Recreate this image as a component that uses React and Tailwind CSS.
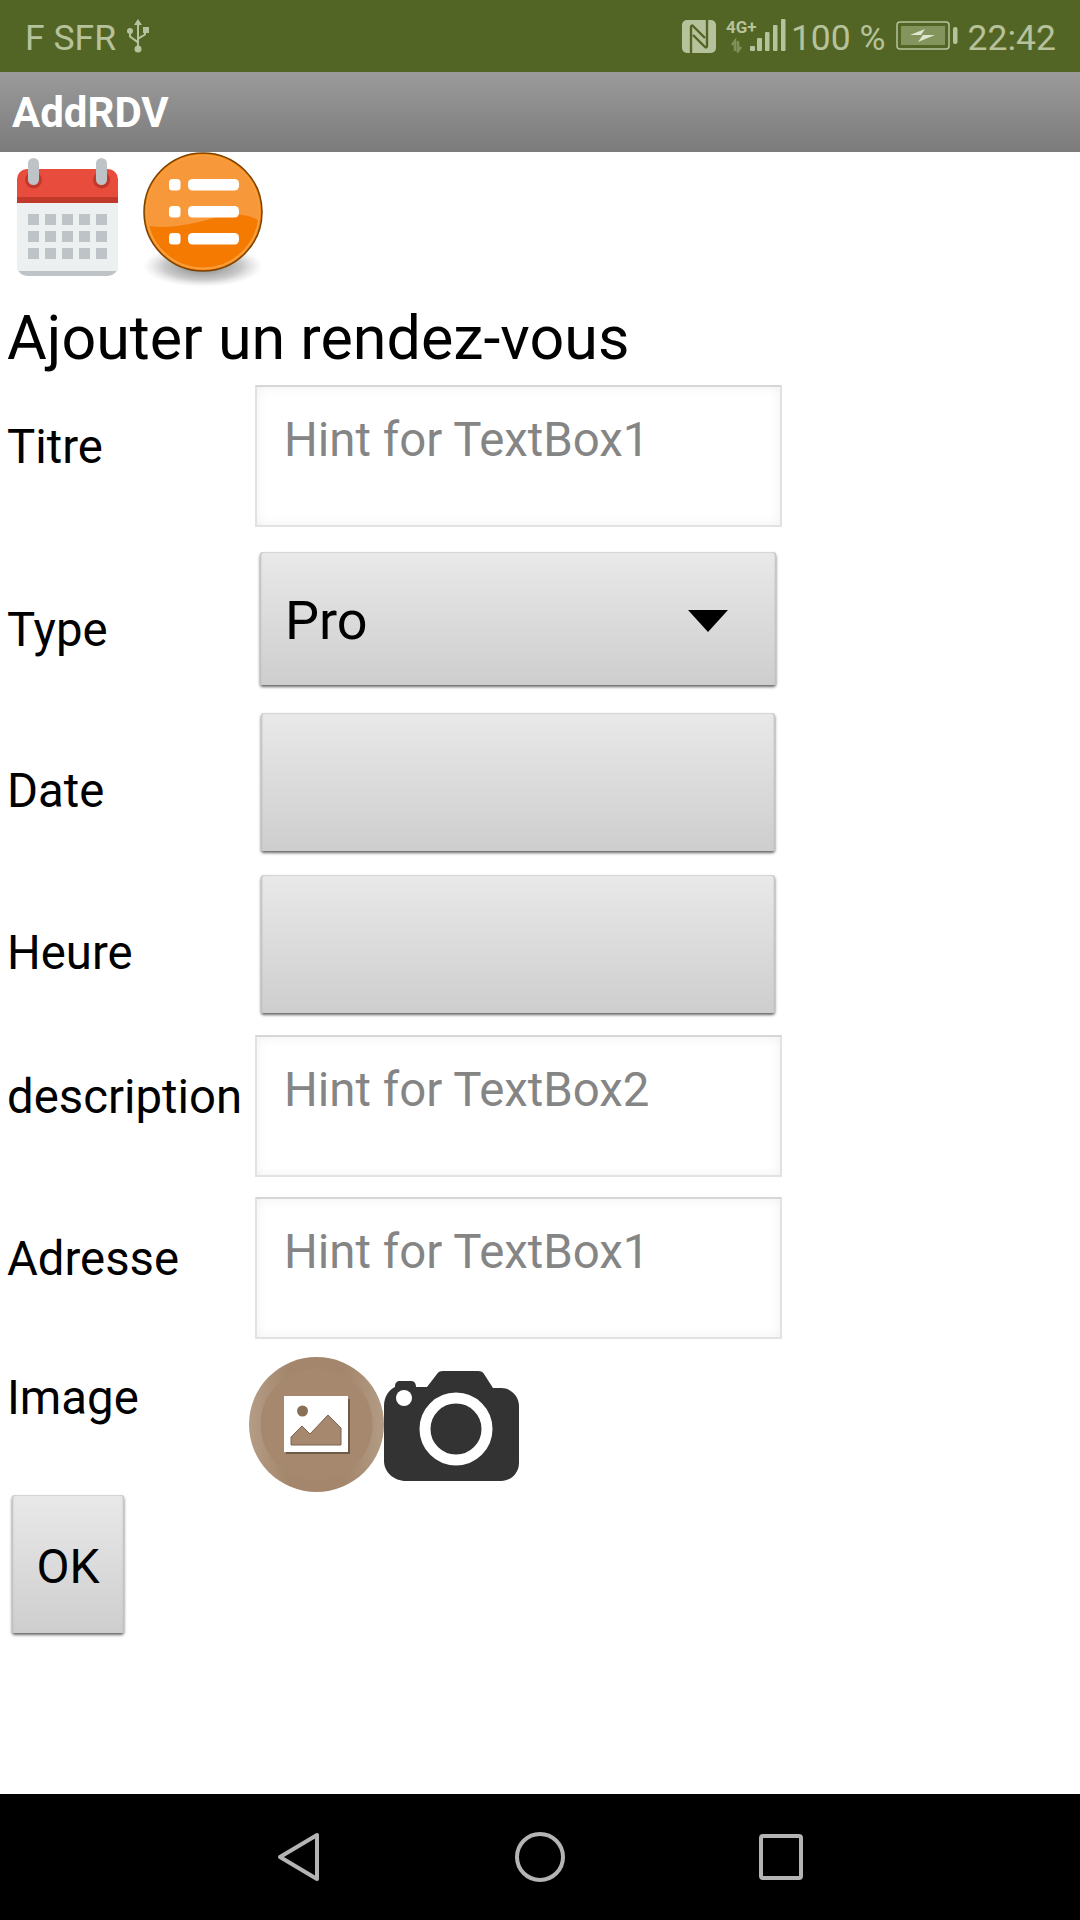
import React from "react";

const RAISED =
  "bg-linear-to-b from-[#e9e9e9] to-[#cecece] rounded-[3px] shadow-[0_2px_3px_#666,inset_2px_0_2px_-1px_#bdbdbd,inset_-2px_0_2px_-1px_#bdbdbd,inset_0_1px_1px_#d8d8d8]";

function CalendarIcon() {
  const cols = [28, 45, 62, 79, 96];
  const rows = [214, 231, 248];
  return (
    <svg width="120" height="138" viewBox="0 152 120 138" className="shrink-0">
      <path d="M17 255h101v11a10 10 0 0 1-10 10H27a10 10 0 0 1-10-10z" fill="#bdc3c7" />
      <rect x="17" y="190" width="101" height="81" fill="#ecf0f1" />
      <path d="M17 197v-18a10 10 0 0 1 10-10h81a10 10 0 0 1 10 10v18z" fill="#e74c3c" />
      <rect x="17" y="197" width="101" height="6" fill="#c0392b" />
      <circle cx="33.5" cy="180" r="8.5" fill="#c0392b" />
      <circle cx="101.5" cy="180" r="8.5" fill="#c0392b" />
      <rect x="28" y="158" width="11" height="27" rx="5.5" fill="#bdc3c7" />
      <rect x="96" y="158" width="11" height="27" rx="5.5" fill="#bdc3c7" />
      {rows.map((y) =>
        cols.map((x) => <rect key={`${x}-${y}`} x={x} y={y} width="11" height="11" fill="#bdc3c7" />)
      )}
    </svg>
  );
}

function ListIcon() {
  return (
    <svg width="124" height="138" viewBox="142 152 124 138" className="shrink-0">
      <defs>
        <radialGradient id="listShadow" cx="0.5" cy="0.5" r="0.5">
          <stop offset="0" stopColor="#555" stopOpacity="0.8" />
          <stop offset="0.65" stopColor="#888" stopOpacity="0.45" />
          <stop offset="1" stopColor="#bbb" stopOpacity="0" />
        </radialGradient>
      </defs>
      <ellipse cx="203" cy="266" rx="60" ry="21" fill="url(#listShadow)" />
      <circle cx="203" cy="212" r="59" fill="#f57a02" stroke="#7a4300" strokeWidth="1.5" />
      <circle cx="203" cy="212" r="56.5" fill="none" stroke="#f9a03f" strokeWidth="2" />
      <path
        d="M147 212a56 56 0 0 1 112 0c0 3 0 5-1 8-14-8-30-6-44-2-22 6-44 11-65 8-1-4-2-9-2-14z"
        fill="#f7993a"
      />
      {[179, 206, 233].map((y) => (
        <g key={y} fill="#fff">
          <rect x="169" y={y} width="11.5" height="11.5" rx="3.5" />
          <rect x="188" y={y} width="51" height="11.5" rx="4.5" />
        </g>
      ))}
    </svg>
  );
}

function GalleryIcon() {
  return (
    <svg width="135" height="135" viewBox="249 1357 135 135" className="shrink-0">
      <defs>
        <linearGradient id="galleryRing" x1="0" y1="0" x2="1" y2="0">
          <stop offset="0" stopColor="#b59c85" />
          <stop offset="0.3" stopColor="#a3866b" />
          <stop offset="0.7" stopColor="#a3866b" />
          <stop offset="1" stopColor="#b39b85" />
        </linearGradient>
      </defs>
      <circle cx="316.5" cy="1424.5" r="67.5" fill="url(#galleryRing)" />
      <circle cx="316.5" cy="1424.5" r="56" fill="#a5886d" />
      <rect x="286" y="1399" width="64" height="55" fill="#6f5a47" />
      <rect x="284" y="1396" width="64" height="56" fill="#fff" />
      <circle cx="302.5" cy="1411" r="5.5" fill="#8a6f57" />
      <path d="M291 1445v-8l11-11 8 8 18-19 13 13v17z" fill="#a5886d" stroke="#7a6450" strokeWidth="1" />
    </svg>
  );
}

function CameraIcon() {
  return (
    <svg width="135" height="135" viewBox="384 1357 135 135" className="shrink-0">
      <path
        d="M384 1406c0-10 6-17 11-19v-1c0-3 2-5 5-5h11c3 0 5 2 5 6h11l10-13c1-2 3-3 6-3h35c3 0 5 1 6 3l9 14h8c10 0 18 8 18 18v57c0 10-8 18-18 18h-95c-12 0-22-9-22-20z"
        fill="#333"
      />
      <circle cx="404" cy="1398" r="8" fill="#fff" />
      <circle cx="456" cy="1429" r="31" fill="#333" stroke="#fff" strokeWidth="11" />
    </svg>
  );
}

function UsbIcon() {
  return (
    <svg width="24" height="34" viewBox="0 0 24 34" className="ml-[10px] shrink-0" fill="#b6c29c">
      <path d="M12 0l4 6h-3v21h-2V6H8z" />
      <circle cx="12" cy="30" r="3.5" />
      <path d="M11 24 3 18v-4h2v3l7 5z" />
      <circle cx="4" cy="12" r="3" />
      <path d="M12 21l8-5v-3h-2v2l-7 4z" />
      <rect x="17" y="8" width="6" height="6" />
    </svg>
  );
}

function NfcIcon() {
  return (
    <svg width="34" height="33" viewBox="0 0 34 33" className="shrink-0">
      <rect width="34" height="33" rx="5" fill="#b6c29c" />
      <path d="M9 33V7c0-1 1-2 2-1l12 12M25 0v26c0 1-1 2-2 1L11 15" fill="none" stroke="#536524" strokeWidth="2.4" />
    </svg>
  );
}

function SignalIcon() {
  return (
    <div className="ml-[10px] w-[62px] h-[34px] relative shrink-0">
      <span className="absolute left-0 top-[-1px] text-[17px] leading-[18px] font-bold text-[#b6c29c]">4G+</span>
      <svg width="62" height="34" viewBox="0 0 62 34" className="block">
        <path d="M9 32V22l-3 4M12 22v10l3-4" stroke="#7f9158" strokeWidth="2.5" fill="none" />
        <g fill="#b6c29c">
          <rect x="24" y="27" width="5" height="5" rx="1" />
          <rect x="31" y="19" width="5" height="13" rx="1" />
          <rect x="39" y="13" width="4.5" height="19" rx="1" />
          <rect x="47" y="6" width="4.5" height="26" rx="1" />
          <rect x="55" y="0" width="4.5" height="32" rx="1" />
        </g>
      </svg>
    </div>
  );
}

function BatteryIcon() {
  return (
    <svg width="62" height="30" viewBox="0 0 62 30" className="ml-[10px] shrink-0">
      <rect x="1" y="1" width="52" height="27" rx="3" fill="none" stroke="#b6c29c" strokeWidth="1.5" />
      <rect x="5" y="5" width="44" height="19" fill="#83955c" />
      <path d="M14 14l15-6-4 6h14l-17 7 5-7z" fill="#dfe5d0" />
      <rect x="57" y="6" width="4.5" height="17" rx="2" fill="#b6c29c" />
    </svg>
  );
}

function Hint({ children }) {
  return (
    <div className="w-[527px] h-[142px] ml-[6px] border-2 border-[#e2e2e2] border-t-[#d6d6d6] bg-white shadow-[inset_0_0_12px_#f0f0f0] pl-[27px] pt-[24px] text-[47.4px] leading-[58px] text-[#858585]">
      {children}
    </div>
  );
}

function Label({ className, children }) {
  return <div className={`w-[249px] shrink-0 pl-[7px] text-[47.3px] leading-[50px] text-black ${className}`}>{children}</div>;
}

export default function App() {
  return (
    <div className="w-[1080px] h-[1920px] flex flex-col bg-white font-['Roboto',sans-serif] overflow-hidden">
      <div className="h-[72px] shrink-0 bg-[#536524] flex items-center justify-between pl-[25px] pr-[24px] text-[35.5px] text-[#b6c29c]">
        <div className="flex items-center">
          <span className="mt-[5px]">F SFR</span>
          <UsbIcon />
        </div>
        <div className="flex items-center">
          <NfcIcon />
          <SignalIcon />
          <span className="ml-[3px] mt-[5px]">100 %</span>
          <BatteryIcon />
          <span className="ml-[10px] mt-[5px]">22:42</span>
        </div>
      </div>

      <div className="h-[80px] shrink-0 bg-linear-to-b from-[#9b9b9b] to-[#7b7b7b] flex items-center pl-[12px] text-[42px] font-bold text-white">
        AddRDV
      </div>

      <div className="flex-1 flex flex-col">
        <div className="h-[138px] flex items-start">
          <CalendarIcon />
          <div className="ml-[22px]">
            <ListIcon />
          </div>
        </div>
        <div className="h-[95px] pl-[7px] pt-[16px] text-[61px] leading-[64px] text-black">Ajouter un rendez-vous</div>

        <div className="h-[142px] flex items-start">
          <Label className="mt-[37px]">Titre</Label>
          <Hint>Hint for TextBox1</Hint>
        </div>

        <div className="mt-[25px] h-[133px] flex items-start">
          <Label className="mt-[53px]">Type</Label>
          <div className={`${RAISED} ml-[11px] w-[516px] h-[133px] flex items-center justify-between pl-[25px] pr-[48px]`}>
            <span className="text-[54px] text-black mt-[3px]">Pro</span>
            <svg width="40" height="22" viewBox="0 0 40 22" className="mt-[4px]">
              <path d="M0 0h40L20 22z" fill="#000" />
            </svg>
          </div>
        </div>

        <div className="mt-[28px] h-[138px] flex items-start">
          <Label className="mt-[53px]">Date</Label>
          <div className={`${RAISED} ml-[12px] w-[514px] h-[138px]`} />
        </div>

        <div className="mt-[24px] h-[138px] flex items-start">
          <Label className="mt-[53px]">Heure</Label>
          <div className={`${RAISED} ml-[12px] w-[514px] h-[138px]`} />
        </div>

        <div className="mt-[22px] h-[142px] flex items-start">
          <Label className="mt-[37px]">description</Label>
          <Hint>Hint for TextBox2</Hint>
        </div>

        <div className="mt-[20px] h-[142px] flex items-start">
          <Label className="mt-[37px]">Adresse</Label>
          <Hint>Hint for TextBox1</Hint>
        </div>

        <div className="mt-[18px] h-[135px] flex items-start">
          <Label className="mt-[16px]">Image</Label>
          <GalleryIcon />
          <CameraIcon />
        </div>

        <div className={`${RAISED} mt-[3px] ml-[12px] w-[112px] h-[138px] pt-[5px] flex items-center justify-center text-[48px] text-black`}>
          OK
        </div>
      </div>

      <div className="h-[126px] shrink-0 bg-black flex items-center justify-center gap-[194px]">
        <svg width="44" height="50" viewBox="0 0 44 50">
          <path d="M40 3v44L3 25z" fill="none" stroke="#b4b4b4" strokeWidth="4" strokeLinejoin="round" />
        </svg>
        <svg width="50" height="50" viewBox="0 0 50 50">
          <circle cx="25" cy="25" r="23" fill="none" stroke="#b4b4b4" strokeWidth="4" />
        </svg>
        <svg width="44" height="46" viewBox="0 0 44 46">
          <rect x="2" y="2" width="40" height="42" rx="2" fill="none" stroke="#b4b4b4" strokeWidth="4" />
        </svg>
      </div>
    </div>
  );
}
